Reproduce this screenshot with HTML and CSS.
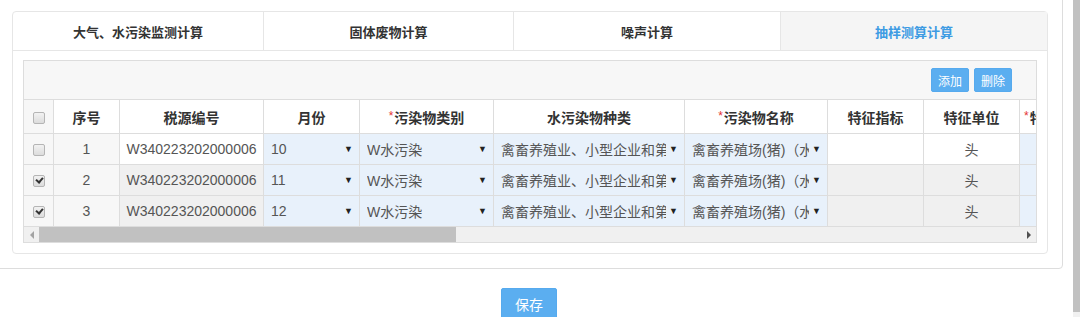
FILE: index.html
```html
<!DOCTYPE html>
<html lang="zh-CN">
<head>
    <meta charset="UTF-8">
    <title>抽样测算计算</title>
    <link rel="stylesheet" href="styles.css">
</head>
<body>
    <div class="page">
        <div class="main">
            <div class="outer">
                <div class="card">
                    <div class="tabs">
                        <div class="tab">大气、水污染监测计算</div>
                        <div class="tab">固体废物计算</div>
                        <div class="tab">噪声计算</div>
                        <div class="tab active">抽样测算计算</div>
                    </div>
                    <div class="card-body">
                        <div class="grid">
                            <div class="toolbar">
                                <button class="btn btn-sm">添加</button>
                                <button class="btn btn-sm">删除</button>
                            </div>
                            <div class="table-wrap">
                                <table>
                                    <colgroup>
                                        <col style="width:30px">
                                        <col style="width:66px">
                                        <col style="width:144px">
                                        <col style="width:96px">
                                        <col style="width:134px">
                                        <col style="width:191px">
                                        <col style="width:143px">
                                        <col style="width:96px">
                                        <col style="width:96px">
                                        <col style="width:110px">
                                    </colgroup>
                                    <thead>
                                        <tr>
                                            <th class="chk-cell"><span class="chk"></span></th>
                                            <th>序号</th>
                                            <th>税源编号</th>
                                            <th>月份</th>
                                            <th><span class="req">*</span>污染物类别</th>
                                            <th>水污染物种类</th>
                                            <th><span class="req">*</span>污染物名称</th>
                                            <th>特征指标</th>
                                            <th>特征单位</th>
                                            <th class="left"><span class="req">*</span>特征值</th>
                                        </tr>
                                    </thead>
                                    <tbody id="rows"></tbody>
                                </table>
                            </div>
                            <div class="hscroll">
                                <span class="arrow-l"></span>
                                <div class="track"><div class="thumb"></div></div>
                                <span class="arrow-r"></span>
                            </div>
                        </div>
                    </div>
                </div>
            </div>
            <div class="actions">
                <button class="btn btn-save">保存</button>
            </div>
        </div>
        <div class="vscroll"><div class="vthumb"></div></div>
    </div>

    <script>
        // sample rows for the 抽样测算 grid
        const rows = [
            { no: 1, month: '10', checked: false },
            { no: 2, month: '11', checked: true },
            { no: 3, month: '12', checked: true }
        ];

        const tbody = document.getElementById('rows');
        rows.forEach(item => {
            const tr = document.createElement('tr');
            if (item.checked) tr.className = 'selected';
            tr.innerHTML = `
                <td class="chk-cell"><span class="chk${item.checked ? ' on' : ''}"></span></td>
                <td class="num">${item.no}</td>
                <td class="plain center">W340223202000006</td>
                <td class="edit"><div class="sel"><span>${item.month}</span><i>▼</i></div></td>
                <td class="edit"><div class="sel"><span>W水污染</span><i>▼</i></div></td>
                <td class="edit"><div class="sel"><span>禽畜养殖业、小型企业和第三产业</span><i>▼</i></div></td>
                <td class="edit"><div class="sel"><span>禽畜养殖场(猪)（水污染）</span><i>▼</i></div></td>
                <td class="plain"></td>
                <td class="plain center">头</td>
                <td class="edit"></td>
            `;
            tbody.appendChild(tr);
        });
    </script>
</body>
</html>
```

FILE: styles.css
```css
body {
    margin: 0;
    font-family: "Liberation Sans", "Noto Sans CJK SC", sans-serif;
    font-size: 14px;
    color: #333;
    background: #fff;
    overflow: hidden;
}
.page {
    display: flex;
    height: 317px;
}
.main {
    width: 1068px;
    margin-left: -5px;
    margin-top: -10px;
}
.outer {
    border: 1px solid #ddd;
    border-radius: 4px;
    padding: 20px 14px 14px 16px;
}
.card {
    border: 1px solid #e6e6e6;
    border-radius: 4px;
    background: #fff;
}
.tabs {
    display: grid;
    grid-template-columns: 250px 250px 267px 1fr;
    height: 38px;
    border-bottom: 1px solid #e6e6e6;
}
.tab {
    display: flex;
    align-items: center;
    justify-content: center;
    font-weight: bold;
    font-size: 13px;
    color: #333;
    border-left: 1px solid #e6e6e6;
}
.tab:first-child {
    border-left: none;
}
.tab.active {
    background: #f5f5f5;
    color: #3d9be3;
}
.card-body {
    padding: 9px 10px 10px 10px;
}
.grid {
    border: 1px solid #ddd;
    background: #f7f7f7;
}
.toolbar {
    height: 38px;
    display: flex;
    justify-content: flex-end;
    align-items: center;
    gap: 5px;
    padding-right: 24px;
}
.btn {
    border: 1px solid #56aaee;
    background: #5baef0;
    color: #fff;
    font-family: "Liberation Sans", "Noto Sans CJK SC", sans-serif;
    border-radius: 2px;
    padding: 0;
}
.btn-sm {
    width: 38px;
    height: 24px;
    font-size: 12px;
}
.table-wrap {
    overflow: hidden;
}
table {
    table-layout: fixed;
    border-collapse: collapse;
    width: 1106px;
    margin-left: -1px;
}
th, td {
    border: 1px solid #ddd;
    padding: 0;
    white-space: nowrap;
    overflow: hidden;
}
th {
    height: 33px;
    background: #fff;
    font-weight: bold;
    color: #333;
    text-align: center;
}
th.left {
    text-align: left;
    padding-left: 4px;
}
td {
    height: 30px;
    color: #555;
}
.chk-cell {
    background: #f7f7f7;
    text-align: center;
}
.num {
    background: #f7f7f7;
    text-align: center;
}
.center {
    text-align: center;
}
.plain {
    background: #fff;
}
tr.selected .plain {
    background: #f0f0f0;
}
.edit {
    background: #e8f1fb;
}
.sel {
    display: flex;
    align-items: center;
    padding: 0 6px 0 7px;
}
.sel span {
    flex: 1;
    min-width: 0;
    overflow: hidden;
    white-space: nowrap;
}
.sel i {
    flex: none;
    font-style: normal;
    font-size: 9px;
    color: #222;
    margin-left: 3px;
}
.req {
    color: #e53333;
    font-size: 12px;
    font-weight: normal;
    vertical-align: 3px;
    margin-right: 1px;
}
.chk {
    display: inline-block;
    width: 10px;
    height: 10px;
    border: 1px solid #b5b5b5;
    border-radius: 2px;
    background: linear-gradient(#f2f2f2, #dcdcdc);
    vertical-align: middle;
    position: relative;
}
.chk.on::after {
    content: "";
    position: absolute;
    left: 2px;
    top: 1px;
    width: 5px;
    height: 3px;
    border-left: 2px solid #333;
    border-bottom: 2px solid #333;
    transform: rotate(-50deg);
}
.hscroll {
    display: flex;
    align-items: center;
    height: 15px;
    background: #f0f0f0;
}
.arrow-l, .arrow-r {
    width: 15px;
    height: 15px;
    display: flex;
    align-items: center;
    justify-content: center;
}
.arrow-l::before {
    content: "";
    border-right: 4px solid #a3a3a3;
    border-top: 4px solid transparent;
    border-bottom: 4px solid transparent;
}
.arrow-r::before {
    content: "";
    border-left: 4px solid #505050;
    border-top: 4px solid transparent;
    border-bottom: 4px solid transparent;
}
.track {
    flex: 1;
    height: 15px;
}
.thumb {
    width: 417px;
    height: 15px;
    background: #c1c1c1;
}
.actions {
    text-align: center;
    padding-top: 19px;
}
.btn-save {
    width: 56px;
    height: 32px;
    font-size: 14px;
}
.vscroll {
    margin-left: auto;
    width: 7px;
    background: #f1f1f1;
}
.vthumb {
    height: 312px;
    background: #c1c1c1;
}
```
